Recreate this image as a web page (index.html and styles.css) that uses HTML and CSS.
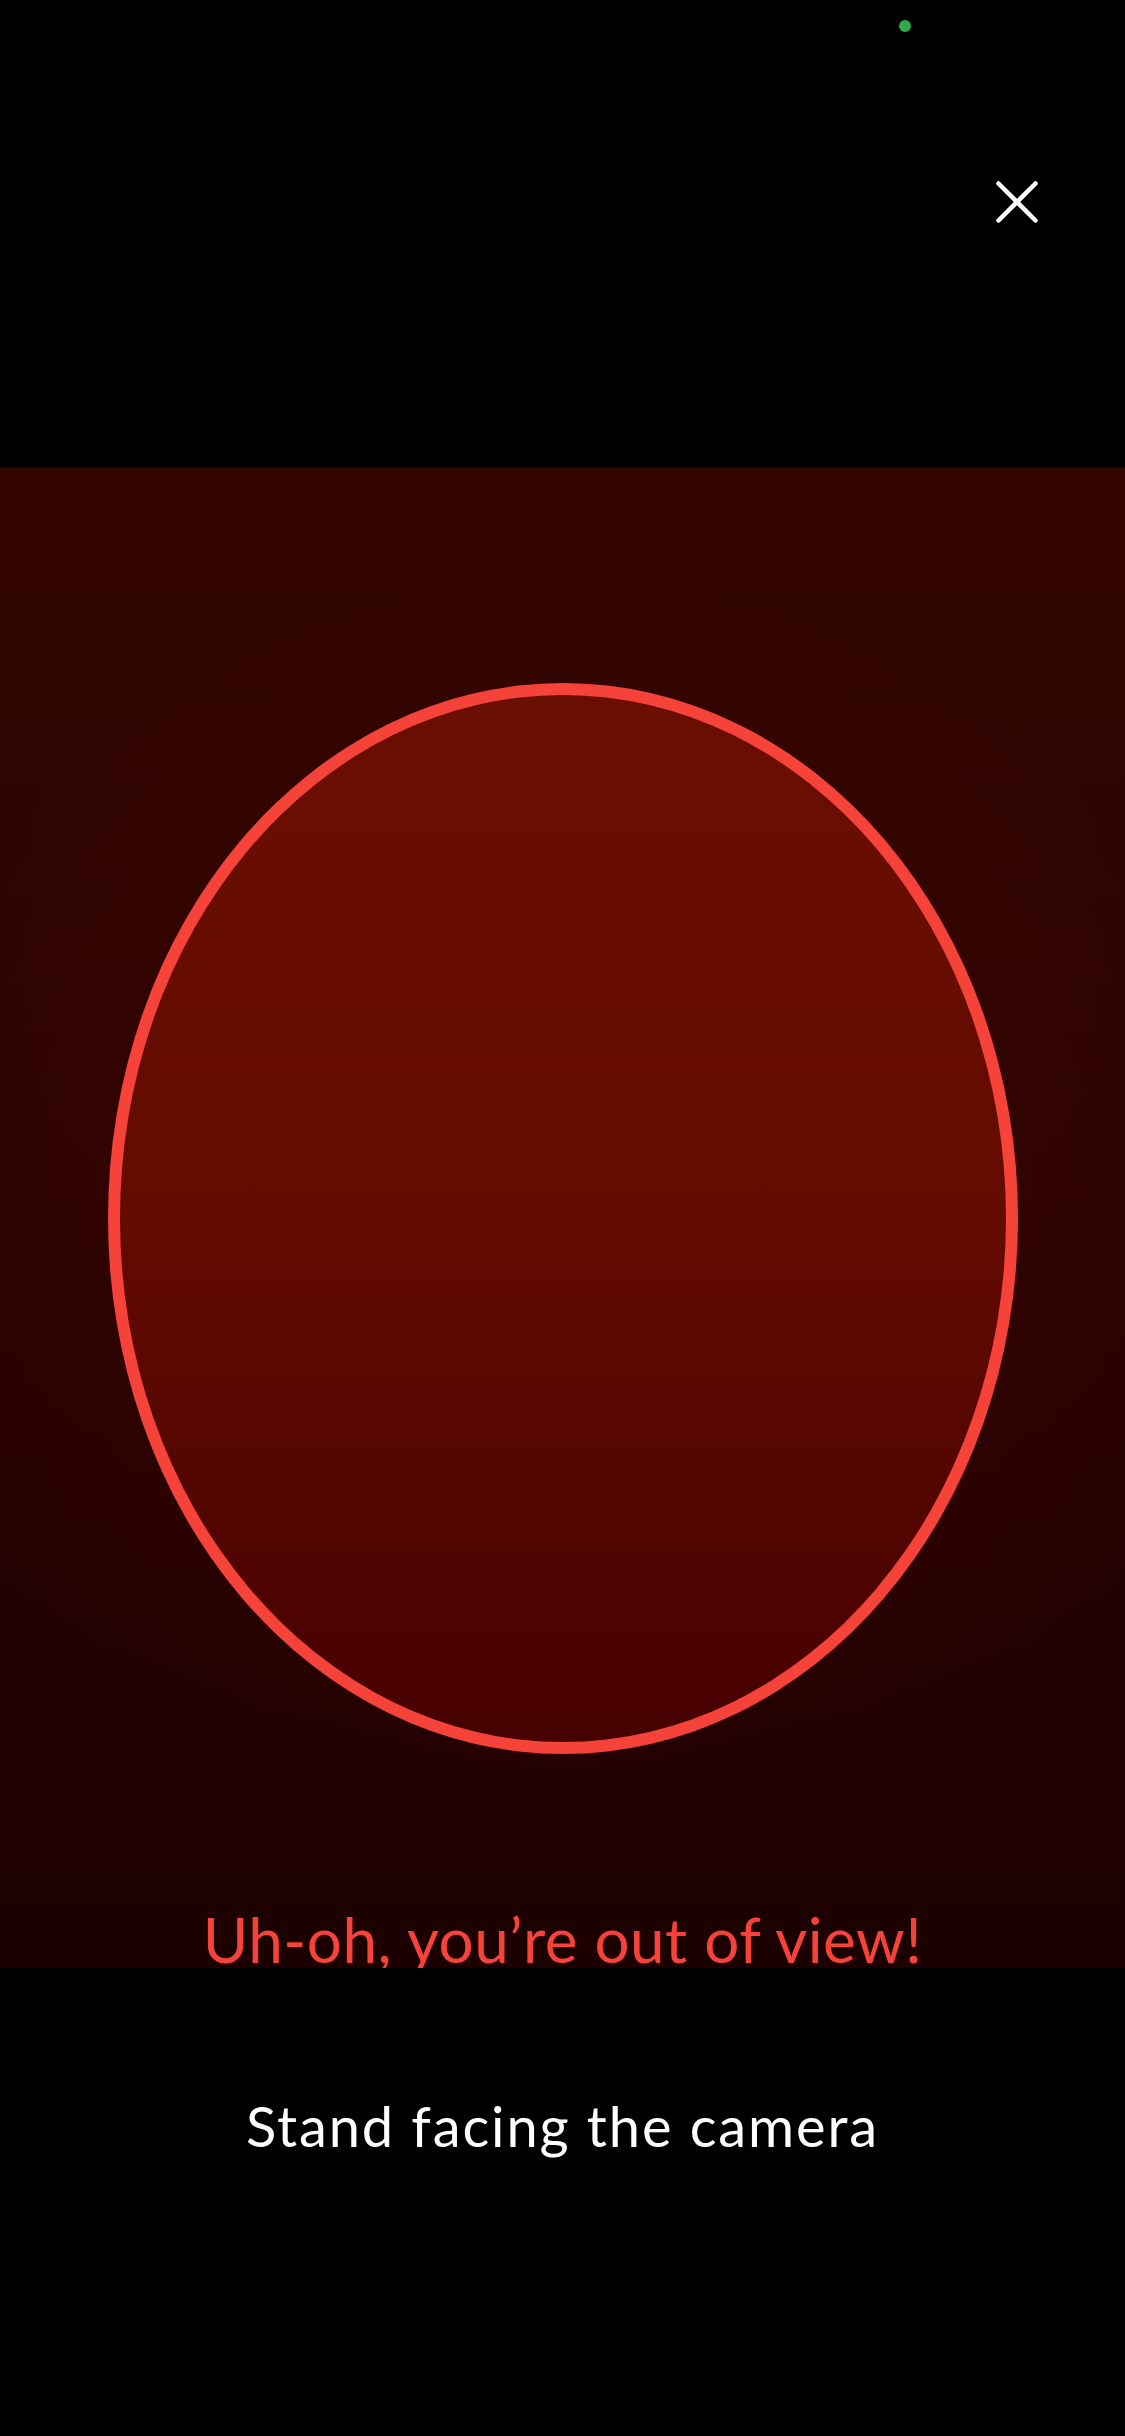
FILE: index.html
```html
<!DOCTYPE html>
<html lang="en">
<head>
<meta charset="utf-8">
<title>Face check</title>
<link rel="stylesheet" href="styles.css">
</head>
<body>
<div class="screen">
  <header class="top">
    <div class="status-row"><span class="cam-dot"></span></div>
    <div class="close-row">
      <svg class="close-icon" width="44" height="44" viewBox="0 0 44 44" aria-label="Close">
        <line x1="3.5" y1="3.5" x2="40.5" y2="40.5"/>
        <line x1="40.5" y1="3.5" x2="3.5" y2="40.5"/>
      </svg>
    </div>
  </header>
  <main class="camera">
    <div class="oval"></div>
    <p class="warning">Uh-oh, you’re out of view!</p>
  </main>
  <footer class="bottom">
    <p class="hint">Stand facing the camera</p>
  </footer>
</div>
</body>
</html>
```

FILE: styles.css
```css
html, body {
  margin: 0;
  padding: 0;
  background: #000;
}
body {
  font-family: "Lato", "Noto Sans", sans-serif;
}
.screen {
  width: 1125px;
  height: 2436px;
  display: flex;
  flex-direction: column;
  background: #000;
}
.top {
  height: 468px;
  flex: none;
  display: flex;
  flex-direction: column;
}
.status-row {
  display: flex;
  justify-content: flex-end;
  padding: 20px 214px 0 0;
}
.cam-dot {
  width: 12px;
  height: 12px;
  border-radius: 50%;
  background: #2fa84c;
}
.close-row {
  display: flex;
  justify-content: flex-end;
  padding: 148px 86px 0 0;
}
.close-icon line {
  stroke: #fff;
  stroke-width: 4.5;
  stroke-linecap: round;
}
.camera {
  height: 1500px;
  flex: none;
  display: flex;
  flex-direction: column;
  align-items: center;
  background:
    radial-gradient(ellipse 60% 45% at 50% 50%, rgba(90, 10, 0, 0.35), rgba(0, 0, 0, 0) 100%),
    linear-gradient(180deg, #330600 0%, #2c0300 45%, #1c0000 100%);
}
.oval {
  margin-top: 215px;
  width: 910px;
  height: 1071px;
  box-sizing: border-box;
  border: 12px solid #f5433a;
  border-radius: 50%;
  background: linear-gradient(180deg, #6a0e01 0%, #630b00 50%, #460000 100%);
  flex: none;
}
.warning {
  margin: 154px 0 0;
  font-size: 62px;
  line-height: 62px;
  letter-spacing: 0.5px;
  color: #f5433a;
  white-space: nowrap;
}
.bottom {
  flex: 1;
  display: flex;
  justify-content: center;
  padding-top: 130px;
  background: #000;
}
.hint {
  margin: 0;
  font-size: 56px;
  line-height: 56px;
  letter-spacing: 1.9px;
  color: #fff;
  white-space: nowrap;
}
```
